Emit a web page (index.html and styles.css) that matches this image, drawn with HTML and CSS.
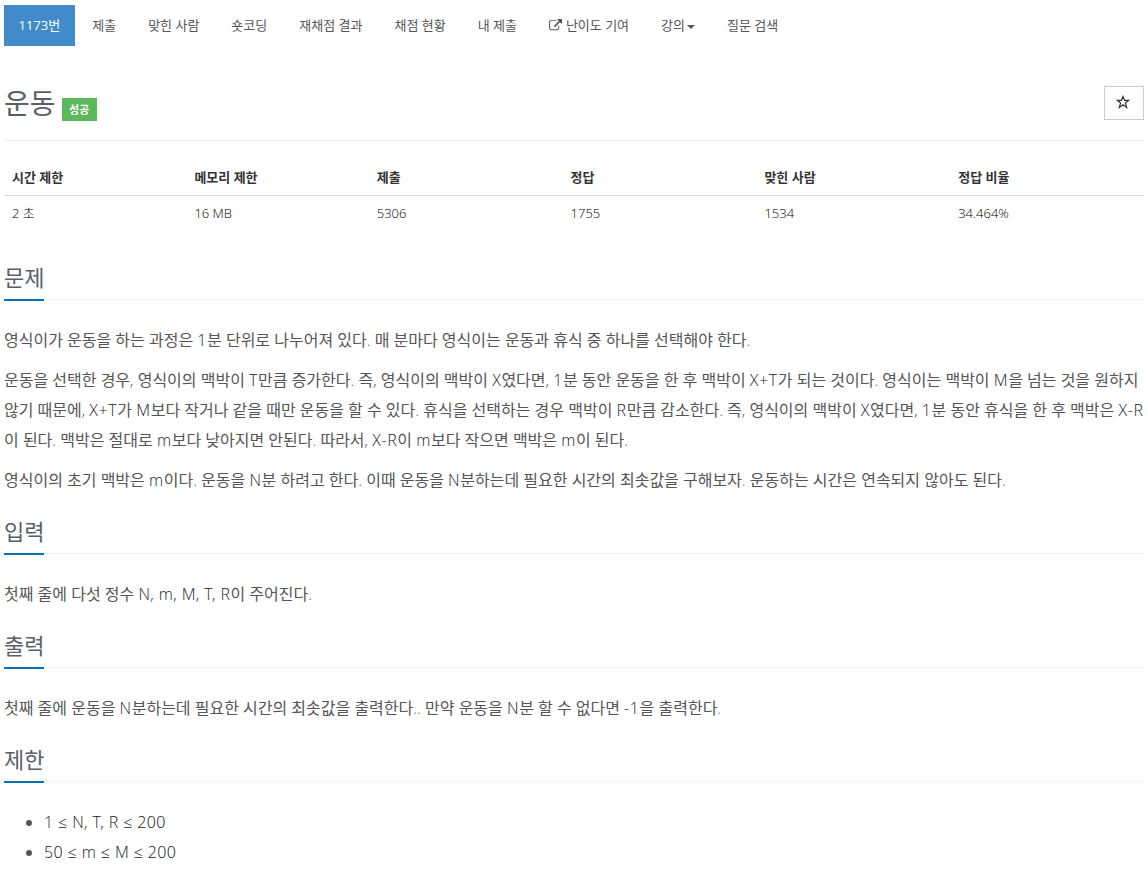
FILE: index.html
```html
<!DOCTYPE html>
<html lang="ko">
<head>
    <meta charset="UTF-8">
    <meta name="viewport" content="width=device-width, initial-scale=1.0">
    <title>1173번: 운동</title>
    <link rel="stylesheet" href="styles.css">
</head>

<body>
    <!-- 문제 메뉴 -->
    <ul class="problem-menu">
        <li class="active"><a href="#">1173번</a></li>
        <li><a href="#">제출</a></li>
        <li><a href="#">맞힌 사람</a></li>
        <li><a href="#">숏코딩</a></li>
        <li><a href="#">재채점 결과</a></li>
        <li><a href="#">채점 현황</a></li>
        <li><a href="#">내 제출</a></li>
        <li><a href="#"><svg class="icon-external" viewBox="0 0 1792 1792"><path fill="currentColor" d="M1408 928v320q0 119-84.500 203.500t-203.500 84.500h-832q-119 0-203.500-84.500t-84.500-203.500v-832q0-119 84.500-203.500t203.500-84.500h704q14 0 23 9t9 23v64q0 14-9 23t-23 9h-704q-66 0-113 47t-47 113v832q0 66 47 113t113 47h832q66 0 113-47t47-113v-320q0-14 9-23t23-9h64q14 0 23 9t9 23zm384-864v512q0 26-19 45t-45 19-45-19l-176-176-652 652q-10 10-23 10t-23-10l-114-114q-10-10-10-23t10-23l652-652-176-176q-19-19-19-45t19-45 45-19h512q26 0 45 19t19 45z"/></svg>난이도 기여</a></li>
        <li><a href="#">강의<span class="caret"></span></a></li>
        <li><a href="#">질문 검색</a></li>
    </ul>

    <!-- 제목 -->
    <div class="page-header">
        <h1>운동</h1>
        <span class="label-success">성공</span>
        <button class="btn-favorite">
            <svg viewBox="0 0 14 14"><path fill="none" stroke="currentColor" stroke-width="1.2" d="M7 1.500L8.500 5.300H12.800L9.400 8L10.700 12.400L7 9.800L3.300 12.400L4.600 8L1.200 5.300H5.500Z"/></svg>
        </button>
    </div>

    <table class="problem-info">
        <thead>
            <tr>
                <th class="limit">시간 제한</th>
                <th class="limit">메모리 제한</th>
                <th>제출</th>
                <th>정답</th>
                <th>맞힌 사람</th>
                <th>정답 비율</th>
            </tr>
        </thead>
        <tbody>
            <tr>
                <td>2 초</td>
                <td>16 MB</td>
                <td>5306</td>
                <td>1755</td>
                <td>1534</td>
                <td>34.464%</td>
            </tr>
        </tbody>
    </table>

    <!-- 본문 -->
    <section class="problem-section">
        <div class="headline"><h2>문제</h2></div>
        <div class="problem-text">
            <p>영식이가 운동을 하는 과정은 <span class="math">1</span>분 단위로 나누어져 있다. 매 분마다 영식이는 운동과 휴식 중 하나를 선택해야 한다.</p>
            <p>운동을 선택한 경우, 영식이의 맥박이 <span class="math">T</span>만큼 증가한다. 즉, 영식이의 맥박이 <span class="math">X</span>였다면, <span class="math">1</span>분 동안 운동을 한 후 맥박이 <span class="math">X+T</span>가 되는 것이다. 영식이는 맥박이 <span class="math">M</span>을 넘는 것을 원하지<br>않기 때문에, <span class="math">X+T</span>가 <span class="math">M</span>보다 작거나 같을 때만 운동을 할 수 있다. 휴식을 선택하는 경우 맥박이 <span class="math">R</span>만큼 감소한다. 즉, 영식이의 맥박이 <span class="math">X</span>였다면, <span class="math">1</span>분 동안 휴식을 한 후 맥박은 <span class="math">X-R</span><br>이 된다. 맥박은 절대로 <span class="math">m</span>보다 낮아지면 안된다. 따라서, <span class="math">X-R</span>이 <span class="math">m</span>보다 작으면 맥박은 <span class="math">m</span>이 된다.</p>
            <p>영식이의 초기 맥박은 <span class="math">m</span>이다. 운동을 <span class="math">N</span>분 하려고 한다. 이때 운동을 <span class="math">N</span>분하는데 필요한 시간의 최솟값을 구해보자. 운동하는 시간은 연속되지 않아도 된다.</p>
        </div>
    </section>

    <section class="problem-section">
        <div class="headline"><h2>입력</h2></div>
        <div class="problem-text">
            <p>첫째 줄에 다섯 정수 <span class="math-list">N, m, M, T, R</span>이 주어진다.</p>
        </div>
    </section>

    <section class="problem-section">
        <div class="headline"><h2>출력</h2></div>
        <div class="problem-text">
            <p>첫째 줄에 운동을 <span class="math">N</span>분하는데 필요한 시간의 최솟값을 출력한다.. 만약 운동을 <span class="math">N</span>분 할 수 없다면 <span class="math">-1</span>을 출력한다.</p>
        </div>
    </section>

    <section class="problem-section">
        <div class="headline"><h2>제한</h2></div>
        <div class="problem-text">
            <ul>
                <li><span class="math-list">1 ≤ N, T, R ≤ 200</span></li>
                <li><span class="math-list">50 ≤ m ≤ M ≤ 200</span></li>
            </ul>
        </div>
    </section>
</body>
</html>
```
FILE: styles.css
```css
* {
    margin: 0;
    padding: 0;
    box-sizing: border-box;
}

body {
    padding: 5px 4px 0;
    font-family: "Open Sans", "Noto Sans CJK KR", sans-serif;
    font-size: 13px;
    line-height: 21px;
    color: #333;
    background: #fff;
    overflow: hidden;
}

/* 메뉴 */
.problem-menu {
    display: flex;
    gap: 3px;
    list-style: none;
}

.problem-menu a {
    display: block;
    height: 41px;
    padding: 10px 14.5px;
    color: #555;
    text-decoration: none;
    white-space: nowrap;
}

.problem-menu .active a {
    color: #fff;
    background: #428bca;
}

.icon-external {
    width: 13px;
    height: 13px;
    margin-right: 4px;
    vertical-align: -2px;
}

.caret {
    display: inline-block;
    margin-left: 2px;
    border-top: 4px solid;
    border-left: 4px solid transparent;
    border-right: 4px solid transparent;
    vertical-align: middle;
}

/* 제목 */
.page-header {
    display: flex;
    align-items: flex-start;
    height: 55px;
    margin-top: 40px;
    border-bottom: 1px solid #eee;
}

.page-header h1 {
    margin-top: -1px;
    font-size: 28px;
    font-weight: 400;
    line-height: 36px;
    color: #585f69;
}

.label-success {
    height: 23px;
    margin: 12px 0 0 6px;
    padding: 0 7.5px;
    font-size: 11px;
    font-weight: 700;
    line-height: 23px;
    color: #fff;
    background: #5cb85c;
}

.btn-favorite {
    display: flex;
    align-items: center;
    justify-content: center;
    width: 40px;
    height: 34px;
    padding: 0 2px 2px 0;
    margin-left: auto;
    color: #333;
    background: #fff;
    border: 1px solid #ccc;
}

.btn-favorite svg {
    width: 14px;
    height: 14px;
}

/* 문제 정보 */
.problem-info {
    width: 100%;
    margin-top: 19px;
    border-collapse: collapse;
    table-layout: fixed;
}

.problem-info th,
.problem-info td {
    height: 35px;
    padding: 1px 8px 0;
    text-align: left;
}

.problem-info td {
    font-weight: 300;
    color: #000;
}

.problem-info th {
    width: 17%;
    font-weight: 700;
    border-bottom: 1px solid #ddd;
}

.problem-info th.limit {
    width: 16%;
}

/* 본문 */
.headline {
    display: flex;
    height: 38px;
    margin: 21px 0 25px;
    border-bottom: 1px dotted #e4e9f0;
}

.problem-info + .problem-section .headline {
    margin-top: 32px;
}

.headline h2 {
    height: 39px;
    font-size: 22px;
    font-weight: 400;
    line-height: 30px;
    color: #585f69;
    border-bottom: 2px solid #0073b7;
}

.problem-text {
    font-family: "Open Sans Light", "Open Sans", "Noto Sans CJK KR", sans-serif;
    font-size: 16px;
    line-height: 30px;
    color: #555;
    white-space: nowrap;
}

.problem-text p + p {
    margin-top: 10px;
}

.problem-text ul {
    padding-left: 40px;
}

/* 수식과 변수 */
.math,
.math-list {
    color: #222;
    letter-spacing: 0.62px;
}

.math-list {
    letter-spacing: 0.4px;
}
```
